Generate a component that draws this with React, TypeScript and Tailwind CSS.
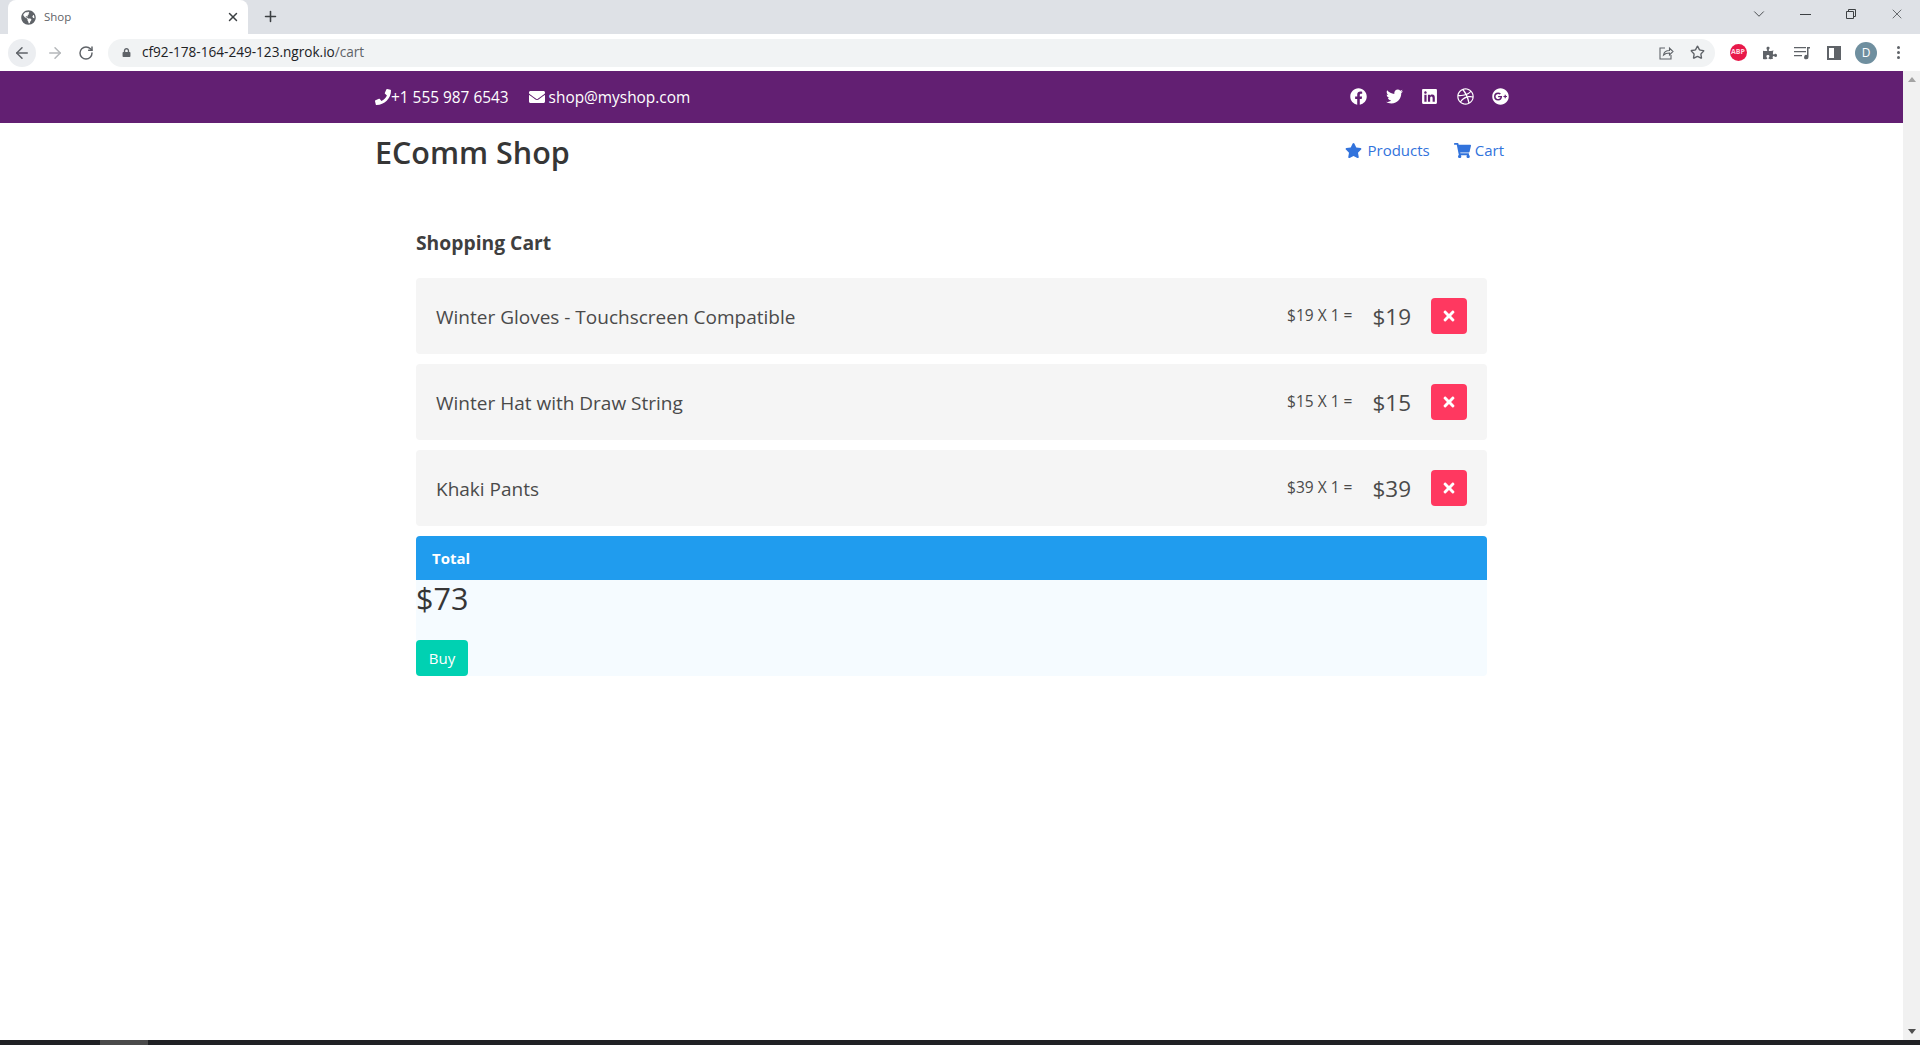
import React from 'react'
import {
    FaPhone,
    FaEnvelope,
    FaFacebook,
    FaTwitter,
    FaLinkedin,
    FaDribbble,
    FaGooglePlus,
    FaStar,
    FaShoppingCart,
    FaTimes,
    FaGlobeAmericas,
    FaPuzzlePiece,
    FaLock,
} from 'react-icons/fa'
import { ArrowLeft, ArrowRight, RotateCw, X, Plus, ChevronDown, Star } from 'lucide-react'

const cartItems = [
    { name: 'Winter Gloves - Touchscreen Compatible', price: 19 },
    { name: 'Winter Hat with Draw String', price: 15 },
    { name: 'Khaki Pants', price: 39 },
]

const BrowserChrome = () => {
    return (
        <div className="shrink-0 font-['Open_Sans',sans-serif]">
            <div className="flex h-[34px] bg-[#dee1e6] pl-2">
                <div className="flex h-[34px] w-[240px] items-center rounded-t-lg bg-white pl-[13px] pr-2">
                    <FaGlobeAmericas className="text-[15px] text-[#5f6368]" />
                    <span className="ml-[8px] text-[11.500px] text-[#5f6368]">Shop</span>
                    <X className="ml-auto text-[#3c4043]" size={14} strokeWidth={2.5} />
                </div>
                <Plus className="ml-[14px] mt-[8px] text-[#3c4043]" size={17} strokeWidth={2.2} />
                <div className="ml-auto flex h-7 items-center text-[#3c4043]">
                    <div className="flex w-[46px] justify-center">
                        <ChevronDown size={18} strokeWidth={1.2} />
                    </div>
                    <div className="flex w-[46px] justify-center">
                        <div className="h-px w-[11px] bg-[#3c4043]" />
                    </div>
                    <div className="flex w-[46px] justify-center">
                        <svg width="10" height="10" viewBox="0 0 10 10" fill="none" stroke="#3c4043">
                            <path d="M2.500 2.500V.5h7v7h-2M.5 2.500h7v7h-7z" />
                        </svg>
                    </div>
                    <div className="flex w-[46px] justify-center">
                        <X size={16} strokeWidth={1.1} />
                    </div>
                </div>
            </div>
            <div className="flex h-[37px] items-center bg-white pl-2">
                <div className="flex h-7 w-7 items-center justify-center rounded-full bg-[#eceef1]">
                    <ArrowLeft className="text-[#5f6368]" size={18} strokeWidth={2} />
                </div>
                <ArrowRight className="ml-[10px] text-[#b5b8bb]" size={18} strokeWidth={2} />
                <RotateCw className="ml-[14px] text-[#5f6368]" size={16} strokeWidth={2.2} />
                <div className="ml-[14px] flex h-7 w-[1607px] items-center rounded-full bg-[#f1f3f4] pl-[14px] pr-[10px]">
                    <FaLock className="text-[9px] text-[#5f6368]" />
                    <span className="ml-[11px] text-[13.600px] text-[#202124]">
                        cf92-178-164-249-123.ngrok.io<span className="text-[#5f6368]">/cart</span>
                    </span>
                    <svg className="ml-auto" width="16" height="16" viewBox="0 0 16 16" fill="none" stroke="#5f6368" strokeWidth="1.1">
                        <path d="M7 3H2v11h11v-4M5.500 10c.5-3 3-4.500 6-4.500V3l3.500 3.500-3.500 3.500V8c-2.500 0-4.500.5-6 2z" />
                    </svg>
                    <Star className="ml-4 text-[#5f6368]" size={15} strokeWidth={2.2} />
                </div>
                <div className="ml-[7px] flex items-center">
                    <div className="flex w-8 justify-center">
                        <div className="flex h-[17px] w-[17px] items-center justify-center rounded-full bg-[#e8194a] text-[7px] font-bold text-[#ffd6e0]">
                            ABP
                        </div>
                    </div>
                    <div className="flex w-8 justify-center">
                        <FaPuzzlePiece className="text-[14px] text-[#5f6368]" />
                    </div>
                    <div className="flex w-8 justify-center">
                        <svg width="18" height="16" viewBox="0 0 18 16" fill="#5f6368">
                            <path d="M1 2h12v1.300H1zM1 6h12v1.300H1zM1 10h8v1.300H1zM14 2h3v1.500h-1.500V12a2.200 2.200 0 1 1-1.500-2z" />
                        </svg>
                    </div>
                    <div className="flex w-8 justify-center">
                        <div className="flex h-[14px] w-[14px] justify-end border-2 border-[#5f6368]">
                            <div className="h-full w-[5px] bg-[#5f6368]" />
                        </div>
                    </div>
                    <div className="flex w-8 justify-center">
                        <div className="flex h-[22px] w-[22px] items-center justify-center rounded-full bg-[#6f8f9f] text-[12px] text-white">
                            D
                        </div>
                    </div>
                    <div className="flex w-8 flex-col items-center gap-[2px]">
                        <div className="h-[3px] w-[3px] rounded-full bg-[#5f6368]" />
                        <div className="h-[3px] w-[3px] rounded-full bg-[#5f6368]" />
                        <div className="h-[3px] w-[3px] rounded-full bg-[#5f6368]" />
                    </div>
                </div>
            </div>
        </div>
    )
}

const TopBar = () => {
    return (
        <div className="flex h-[52px] items-center bg-[#621f72] text-white">
            <div className="mx-auto flex w-[1153px] items-center text-[15.400px]">
                <FaPhone className="text-[16px]" />
                <span className="pt-px">+1 555 987 6543</span>
                <FaEnvelope className="ml-5 text-[16px]" />
                <span className="ml-[4px] pt-px">shop@myshop.com</span>
                <div className="ml-auto mr-[19px] flex items-center gap-[18.500px]">
                    <FaFacebook className="text-[17px]" />
                    <FaTwitter className="text-[17px]" />
                    <FaLinkedin className="text-[17px]" />
                    <FaDribbble className="text-[17px]" />
                    <FaGooglePlus className="text-[17px]" />
                </div>
            </div>
        </div>
    )
}

const NavBar = () => {
    return (
        <div className="mx-auto flex w-[1153px] items-start">
            <h1 className="mt-[7px] text-[30.500px] leading-[44px] font-semibold text-[#363636]">EComm Shop</h1>
            <div className="ml-auto mr-[24px] mt-[16px] flex items-center text-[15px] text-[#3273dc]">
                <FaStar className="text-[17px]" />
                <span className="ml-[6px]">Products</span>
                <FaShoppingCart className="ml-6 text-[17px]" />
                <span className="ml-[4px]">Cart</span>
            </div>
        </div>
    )
}

const App = () => {
    return (
        <div className="flex h-[1045px] flex-col overflow-hidden bg-white font-['Open_Sans',sans-serif]">
            <BrowserChrome />
            <div className="flex min-h-0 flex-1">
                <div className="min-w-0 flex-1">
                    <TopBar />
                    <NavBar />
                    <div className="mx-auto mt-[55px] w-[1071px]">
                        <h2 className="text-[19.300px] leading-[28px] font-bold text-[#3f3f3f]">Shopping Cart</h2>
                        <div className="mt-[21px] flex flex-col gap-[10px]">
                            {cartItems.map((item, index) => (
                                <div key={index} className="flex h-[76px] items-center rounded-[4px] bg-[#f5f5f5] px-5 text-[#4a4a4a]">
                                    <span className="pt-[2px] text-[19px]">{item.name}</span>
                                    <span className="ml-auto text-[15.500px]">${item.price} X 1 =</span>
                                    <span className="ml-5 pt-[2px] text-[22.500px]">${item.price}</span>
                                    <button className="ml-5 flex h-9 w-9 items-center justify-center rounded-[4px] bg-[#ff3860] text-white">
                                        <FaTimes className="text-[16px]" />
                                    </button>
                                </div>
                            ))}
                        </div>
                        <div className="mt-[10px] rounded-[4px] bg-[#f5fbff]">
                            <div className="flex h-11 items-center rounded-t-[4px] bg-[#209cee] px-4 text-[15px] font-bold text-white">
                                Total
                            </div>
                            <div className="text-[30.500px] leading-[36px] text-[#363636]">$73</div>
                            <button className="mt-6 flex h-9 w-[52px] items-center justify-center rounded-[4px] bg-[#00d1b2] text-[15px] text-white">
                                Buy
                            </button>
                        </div>
                    </div>
                </div>
                <div className="flex w-[17px] shrink-0 flex-col items-center justify-between bg-[#f1f1f1] py-[6px]">
                    <div className="h-0 w-0 border-x-[4px] border-b-[5px] border-x-transparent border-b-[#a3a3a3]" />
                    <div className="h-0 w-0 border-x-[4px] border-t-[5px] border-x-transparent border-t-[#505050]" />
                </div>
            </div>
            <div className="flex h-[5px] shrink-0 bg-[#202124] pl-[100px]">
                <div className="h-full w-[48px] bg-[#4a4a4a]" />
            </div>
        </div>
    )
}

export default App
